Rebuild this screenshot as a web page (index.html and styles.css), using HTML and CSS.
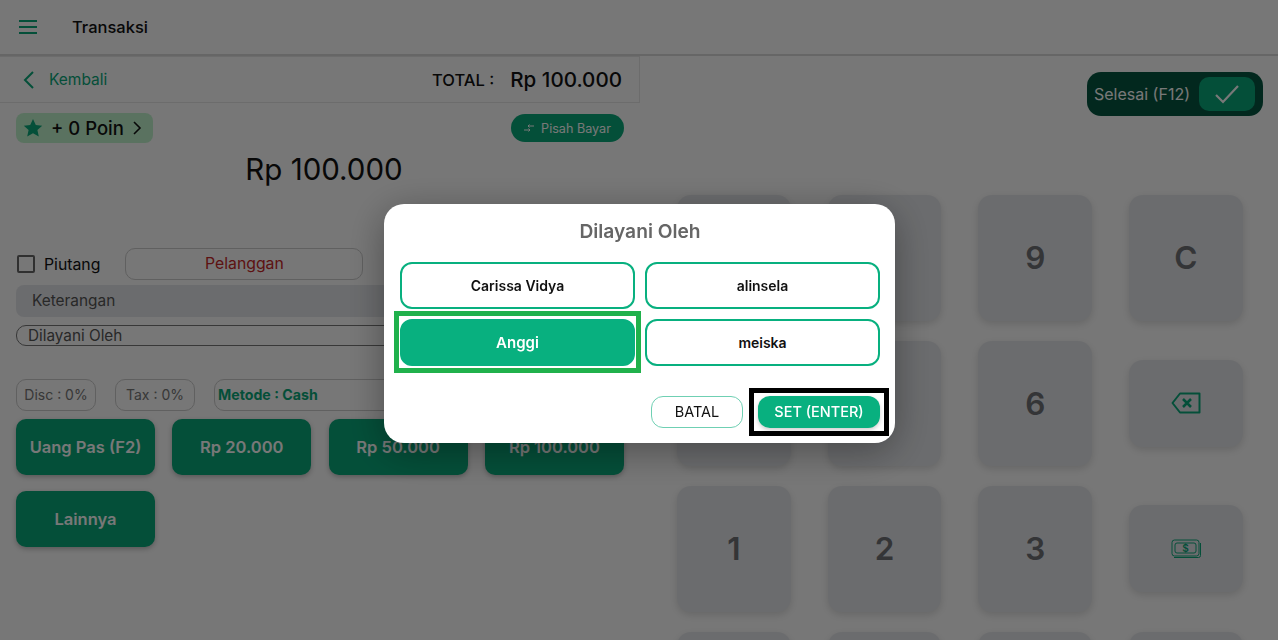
FILE: index.html
```html
<!DOCTYPE html>
<html lang="id">
<head>
    <meta charset="UTF-8">
    <title>Transaksi</title>
    <link rel="stylesheet" href="styles.css">
</head>
<body>
    <header class="topbar">
        <svg class="menu-icon" width="20" height="16" viewBox="0 0 20 16"><path d="M1 2h18M1 8h18M1 14h18" stroke="#0aa87a" stroke-width="2"/></svg>
        <span class="topbar-title">Transaksi</span>
    </header>

    <main class="main">
        <section class="left">
            <div class="subbar">
                <svg width="14" height="20" viewBox="0 0 14 20"><path d="M11 2 3 10l8 8" fill="none" stroke="#0aa87a" stroke-width="2"/></svg>
                <span class="back-label">Kembali</span>
                <span class="total-label">TOTAL :</span>
                <span class="total-value">Rp 100.000</span>
            </div>

            <div class="poin-row">
                <div class="poin">
                    <svg width="20" height="20" viewBox="0 0 20 20"><path d="M10 1l2.800 6 6.400.7-4.800 4.400 1.400 6.400L10 15.200 4.200 18.500l1.400-6.400L.8 7.700 7.200 7z" fill="#0aa87a"/></svg>
                    <span>+ 0 Poin</span>
                    <svg width="10" height="16" viewBox="0 0 10 16"><path d="M2 2l6 6-6 6" fill="none" stroke="#111" stroke-width="1.600"/></svg>
                </div>
                <button class="pisah">
                    <svg width="10" height="8" viewBox="0 0 10 8" fill="none" stroke="#fff" stroke-width="1"><path d="M10 2H4M5.500.5 4 2l1.500 1.500M0 6h6M4.500 4.500 6 6 4.500 7.500"/></svg>
                    Pisah Bayar
                </button>
            </div>

            <div class="amount">Rp 100.000</div>

            <div class="customer-row">
                <span class="checkbox"></span>
                <span class="piutang">Piutang</span>
                <span class="pelanggan">Pelanggan</span>
            </div>
            <div class="keterangan">Keterangan</div>
            <div class="dilayani">Dilayani Oleh</div>

            <div class="chips">
                <span class="chip chip-disc">Disc : 0%</span>
                <span class="chip chip-tax">Tax : 0%</span>
                <span class="chip chip-metode">Metode : Cash</span>
            </div>

            <div class="cash-grid">
                <button class="cash-btn">Uang Pas (F2)</button>
                <button class="cash-btn">Rp 20.000</button>
                <button class="cash-btn">Rp 50.000</button>
                <button class="cash-btn">Rp 100.000</button>
                <button class="cash-btn">Lainnya</button>
            </div>
        </section>

        <section class="right">
            <div class="finish-row">
                <div class="finish">
                    <span>Selesai (F12)</span>
                    <span class="finish-check">
                        <svg width="26" height="20" viewBox="0 0 26 20"><path d="M2 11l7 7L24 2" fill="none" stroke="#fff" stroke-width="2.200"/></svg>
                    </span>
                </div>
            </div>
            <div class="numpad">
                <div class="key">7</div><div class="key">8</div><div class="key">9</div>
                <div class="key">C</div>
                <div class="key">4</div><div class="key">5</div><div class="key">6</div>
                <div class="key key-short">
                    <svg width="30" height="22" viewBox="0 0 30 22"><path d="M9 1.500h19.500v19H9L1.500 11z" fill="none" stroke="#0aa87a" stroke-width="2" stroke-linejoin="round"/><path d="M12 7l8 8M20 7l-8 8" stroke="#0aa87a" stroke-width="2.500"/></svg>
                </div>
                <div class="key">1</div><div class="key">2</div><div class="key">3</div>
                <div class="key key-short">
                    <svg width="30" height="20" viewBox="0 0 30 20" fill="none" stroke="#0aa87a"><rect x="1" y="1" width="27" height="16" rx="2.500"/><path d="M3 18.500h24.500q2 0 2-2V4"/><rect x="4" y="4" width="21" height="10" rx="2"/><text x="14.500" y="12.500" class="money-sign">$</text></svg>
                </div>
                <div class="key"></div><div class="key"></div><div class="key"></div><div class="key"></div>
            </div>
        </section>
    </main>

    <div class="overlay">
        <div class="dialog">
            <h2 class="dialog-title">Dilayani Oleh</h2>
            <div class="staff-grid">
                <button class="staff">Carissa Vidya</button>
                <button class="staff">alinsela</button>
                <button class="staff staff-active">Anggi</button>
                <button class="staff">meiska</button>
            </div>
            <div class="dialog-actions">
                <button class="btn-cancel">BATAL</button>
                <button class="btn-set">SET (ENTER)</button>
            </div>
        </div>
    </div>
</body>
</html>
```

FILE: styles.css
```css
* {
    box-sizing: border-box;
}

html, body {
    height: 100%;
}

body {
    margin: 0;
    overflow: hidden;
    background: #fcfcfc;
    color: #111;
    font-family: Inter, "Open Sans", "Liberation Sans", sans-serif;
}

button {
    font-family: inherit;
    cursor: pointer;
}

.topbar {
    height: 56px;
    display: flex;
    align-items: center;
    padding-left: 18px;
    border-bottom: 2px solid #d8d8d8;
}

.topbar-title {
    margin-left: 34px;
    font-size: 16.500px;
    font-weight: 500;
}

.main {
    display: flex;
    height: 584px;
    overflow: hidden;
}

.left {
    width: 640px;
    flex-shrink: 0;
}

.subbar {
    height: 47px;
    display: flex;
    align-items: center;
    padding: 0 17px 0 22px;
    border: 1px solid #e6e6e6;
    border-left: 0;
}

.back-label {
    margin-left: 13px;
    color: #0aa87a;
    font-size: 15.500px;
}

.total-label {
    margin-left: auto;
    font-size: 16.500px;
    font-weight: 500;
}

.total-value {
    margin-left: 16px;
    font-size: 20.600px;
    font-weight: 500;
}

.poin-row {
    display: flex;
    align-items: center;
    justify-content: space-between;
    padding: 10px 16px 0;
}

.poin {
    width: 137px;
    height: 30px;
    display: flex;
    align-items: center;
    gap: 8px;
    padding-left: 7px;
    border-radius: 8px;
    background: #c0f2cc;
    font-size: 18.500px;
    font-weight: 500;
}

.pisah {
    width: 113px;
    height: 28px;
    display: flex;
    align-items: center;
    justify-content: center;
    gap: 7px;
    padding: 0;
    border: 0;
    border-radius: 14px;
    background: #0aa87a;
    color: #fff;
    font-size: 12.600px;
}

.amount {
    margin-top: 10px;
    height: 32px;
    line-height: 32px;
    text-align: center;
    font-size: 29.500px;
    padding-left: 8px;
}

.customer-row {
    display: flex;
    align-items: center;
    margin-top: 63px;
    padding-left: 17px;
    height: 32px;
}

.checkbox {
    width: 18px;
    height: 18px;
    border: 2px solid #666;
    border-radius: 2px;
}

.piutang {
    margin-left: 9px;
    font-size: 15.800px;
}

.pelanggan {
    width: 238px;
    height: 32px;
    margin-left: 25px;
    line-height: 30px;
    text-align: center;
    border: 1px solid #ccc;
    border-radius: 10px;
    color: #c62828;
    font-size: 15.800px;
}

.keterangan {
    height: 32px;
    margin: 5px 0 0 16px;
    padding-left: 16px;
    line-height: 32px;
    border-radius: 8px;
    background: #e4e6ea;
    color: #555;
    font-size: 15.400px;
}

.dilayani {
    height: 21px;
    margin: 8px 0 0 16px;
    padding-left: 11px;
    line-height: 19px;
    border: 1px solid #777;
    border-radius: 10px;
    color: #555;
    font-size: 15.300px;
}

.chips {
    display: flex;
    margin: 33px 0 0 16px;
    gap: 19px;
}

.chip {
    height: 32px;
    line-height: 30px;
    border: 1px solid #ccc;
    border-radius: 10px;
    color: #777;
    font-size: 14px;
    text-align: center;
}

.chip-disc {
    width: 80px;
}

.chip-tax {
    width: 80px;
}

.chip-metode {
    flex: 1;
    padding-left: 3px;
    text-align: left;
    color: #0aa87a;
    font-size: 14.200px;
    font-weight: 700;
}

.cash-grid {
    display: grid;
    grid-template-columns: repeat(4, 139px);
    gap: 16px 17.300px;
    margin: 8px 0 0 16px;
}

.cash-btn {
    height: 56px;
    padding: 0;
    border: 0;
    border-radius: 10px;
    background: #0aa87a;
    color: #fff;
    font-size: 16.500px;
    font-weight: 600;
    box-shadow: 0 2px 5px rgba(0, 0, 0, 0.25);
}

.right {
    flex: 1;
    min-width: 0;
    padding: 16px 15px 0 37px;
}

.finish-row {
    display: flex;
    justify-content: flex-end;
}

.finish {
    width: 176px;
    height: 44px;
    display: flex;
    align-items: center;
    justify-content: space-between;
    padding: 0 8px 0 7px;
    border-radius: 14px;
    background: #055640;
    color: #fff;
    font-size: 16px;
}

.finish-check {
    width: 56px;
    height: 34px;
    display: flex;
    align-items: center;
    justify-content: center;
    border-radius: 10px;
    background: #0aa87a;
}

.numpad {
    display: grid;
    grid-template-columns: repeat(4, 113.700px);
    grid-auto-rows: 125.500px;
    gap: 20px 37px;
    margin-top: 79px;
}

.key {
    display: flex;
    align-items: center;
    justify-content: center;
    border-radius: 14px;
    background: #e4e6ea;
    box-shadow: 0 3px 7px rgba(0, 0, 0, 0.13);
    color: #707175;
    font-size: 31.500px;
    font-weight: 600;
}

.key-short {
    height: 87px;
    align-self: center;
}

.money-sign {
    fill: #0aa87a;
    stroke: none;
    font-size: 10px;
    text-anchor: middle;
}

.overlay {
    position: fixed;
    inset: 0;
    display: flex;
    align-items: center;
    justify-content: center;
    padding: 6px 0 0 1px;
    background: rgba(0, 0, 0, 0.53);
}

.dialog {
    width: 511px;
    height: 239px;
    padding: 15px 15px 0 16px;
    border-radius: 20px;
    background: #fff;
    box-shadow: 0 8px 38px rgba(0, 0, 0, 0.35);
}

.dialog-title {
    margin: 0;
    text-align: center;
    color: #666;
    font-size: 19.200px;
    line-height: 24px;
    font-weight: 600;
}

.staff-grid {
    display: grid;
    grid-template-columns: 235px 235px;
    grid-auto-rows: 47px;
    gap: 10px;
    margin-top: 19px;
}

.staff {
    position: relative;
    padding: 0;
    border: 2px solid #08b07f;
    border-radius: 12px;
    background: #fff;
    color: #111;
    font-size: 14px;
    font-weight: 600;
}

.staff-active {
    background: #08b07f;
    color: #fff;
    font-size: 15px;
}

/* highlight frames drawn over the two buttons */
.staff-active::after,
.btn-set::after {
    content: "";
    position: absolute;
    pointer-events: none;
}

.staff-active::after {
    inset: -10px -8px -9px;
    border: 5px solid #20b14c;
}

.dialog-actions {
    display: flex;
    justify-content: flex-end;
    align-items: center;
    gap: 15px;
    margin-top: 30px;
}

.btn-cancel {
    width: 92px;
    height: 32px;
    padding: 0;
    border: 1.500px solid #6fd0b3;
    border-radius: 12px;
    background: #fff;
    color: #111;
    font-size: 14.500px;
}

.btn-set {
    position: relative;
    width: 122px;
    height: 32px;
    padding: 0;
    border: 0;
    border-radius: 12px;
    background: #08b07f;
    color: #fff;
    font-size: 14.500px;
    font-weight: 500;
    box-shadow: 0 2px 4px rgba(0, 0, 0, 0.2);
}

.btn-set::after {
    inset: -8px -9px;
    border: 5px solid #000;
}
```
